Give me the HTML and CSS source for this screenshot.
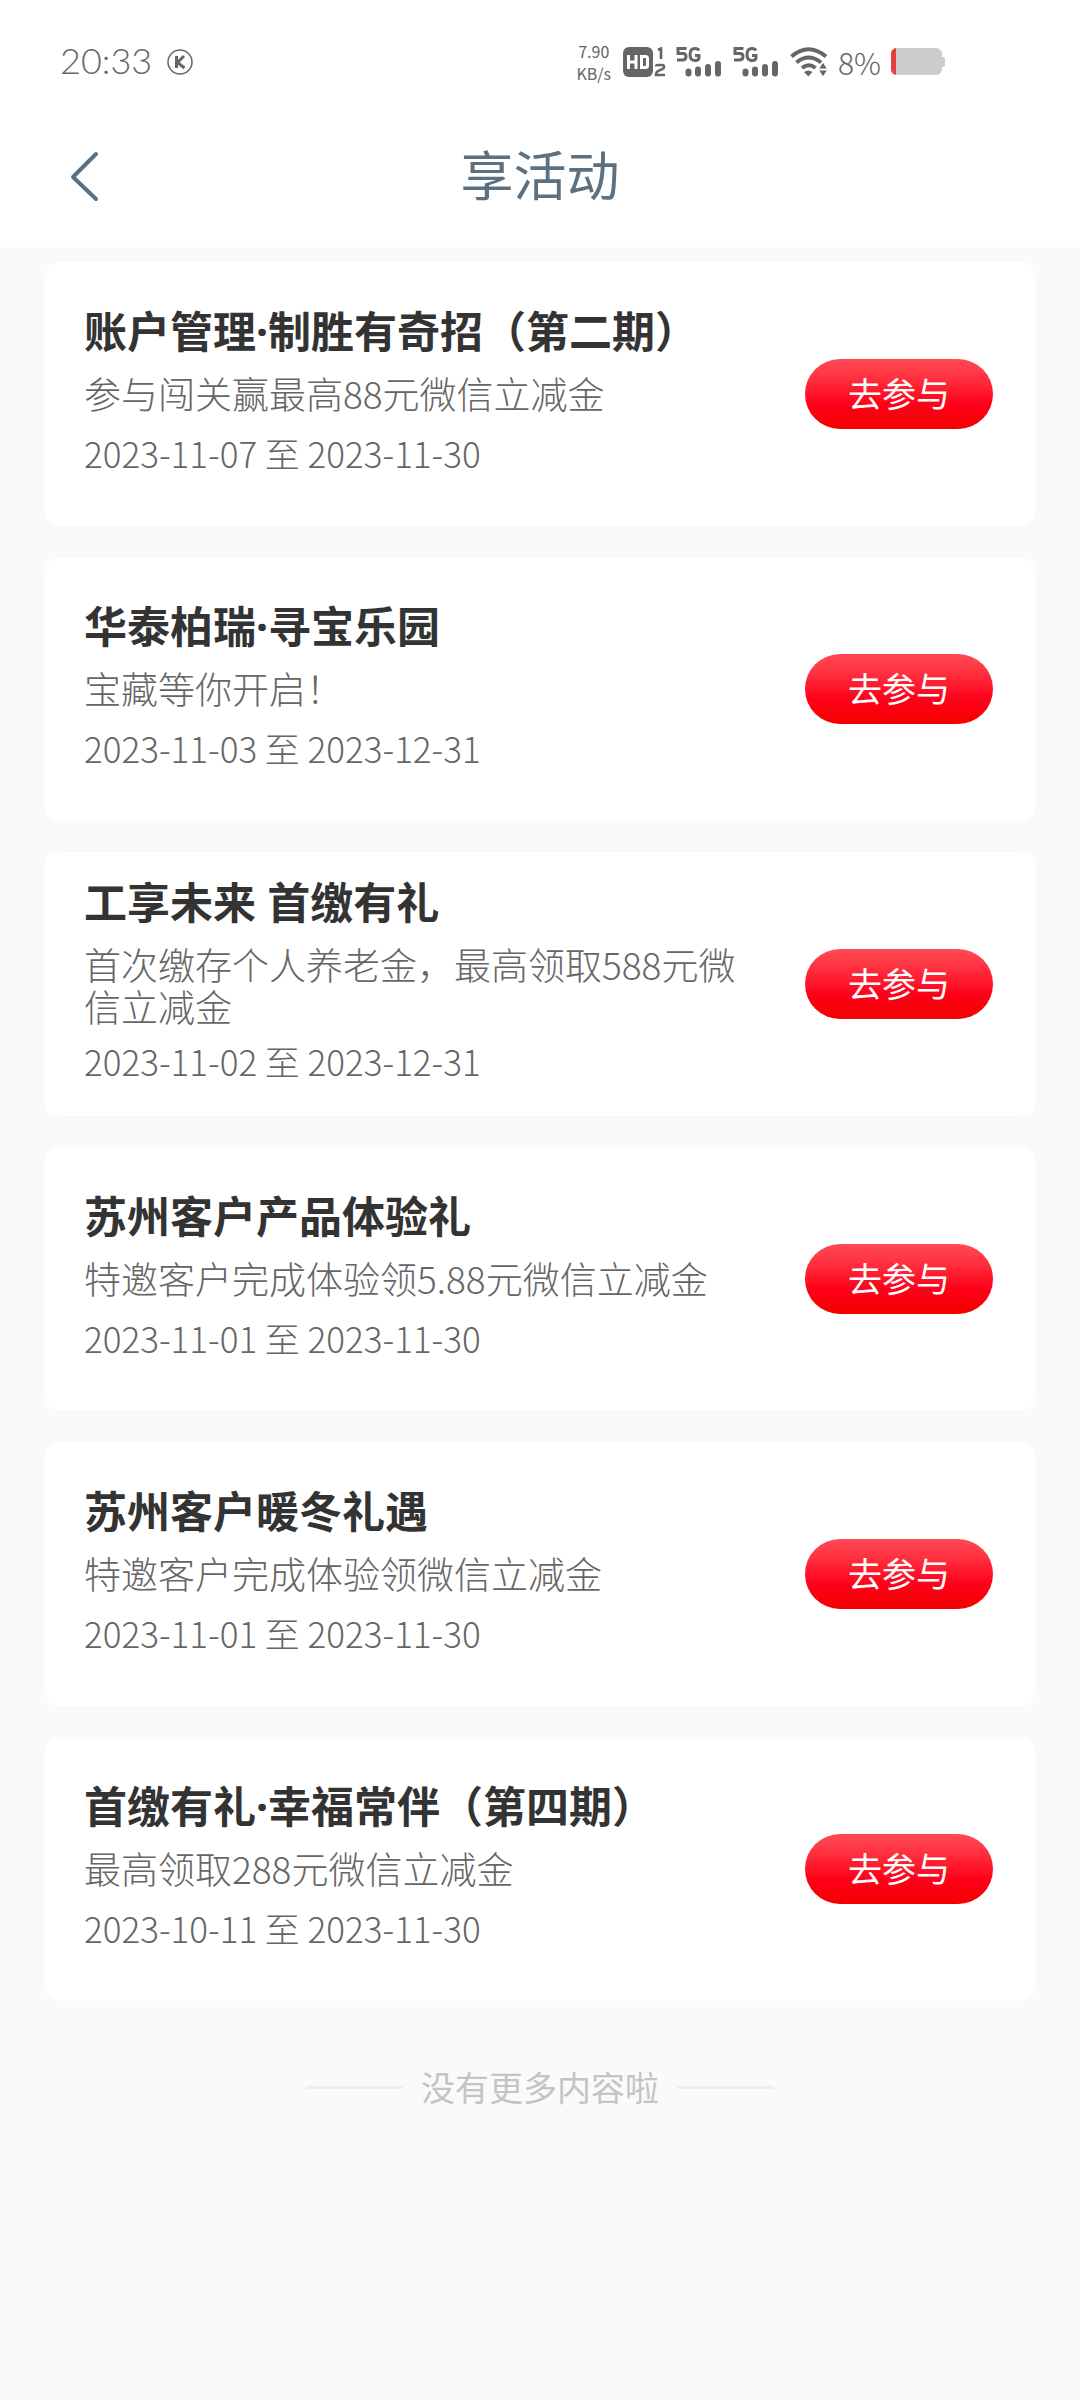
FILE: index.html
```html
<!DOCTYPE html>
<html lang="zh-CN">
<head>
    <meta charset="UTF-8">
    <meta name="viewport" content="width=device-width, initial-scale=1.0">
    <title>享活动</title>
    <link rel="stylesheet" href="styles.css">
</head>
<body>
    <header class="header">
        <div class="status-bar">
            <div class="status-left">
                <span class="time">20:33</span>
                <svg class="k-icon" width="28" height="28" viewBox="0 0 28 28">
                    <circle cx="14" cy="14" r="12" fill="none" stroke="#666" stroke-width="1.5"/>
                    <path d="M10.5 8v12M18 8l-6.5 6.5L18.500 20" fill="none" stroke="#666" stroke-width="3"/>
                </svg>
            </div>
            <div class="status-right">
                <div class="speed">
                    <span>7.90</span>
                    <span>KB/s</span>
                </div>
                <svg class="hd" width="44" height="30" viewBox="0 0 44 30">
                    <rect width="30" height="30" rx="6" fill="#666"/>
                    <path d="M5.500 8v14M13 8v14M5.500 15H13M18.500 9.500h4q2 0 2 2v7q0 2-2 2h-4z" fill="none" stroke="#fff" stroke-width="3"/>
                    <path d="M35 3l3-1.500V12M33 19.500q0-1.500 2-1.500h4q2 0 2 1.800t-2 2.400l-4 2q-2 1-2 3.800h9" fill="none" stroke="#666" stroke-width="2.600"/>
                </svg>
                <svg class="signal" width="45" height="30" viewBox="0 0 45 30">
                    <path d="M10.500 1.500H2v5h5q3 0 3 3t-3 3.500H1M23 3.500Q22 1.500 19 1.500q-5 0-5 6t5 6q4 0 4-3V8.500h-4" fill="none" stroke="#666" stroke-width="3"/>
                    <path d="M12.500 24.500v2M22 22.500v4M32 20v6.500M42 17v9.500" stroke="#666" stroke-width="6" stroke-linecap="round"/>
                </svg>
                <svg class="signal" width="45" height="30" viewBox="0 0 45 30">
                    <path d="M10.500 1.500H2v5h5q3 0 3 3t-3 3.500H1M23 3.500Q22 1.500 19 1.500q-5 0-5 6t5 6q4 0 4-3V8.500h-4" fill="none" stroke="#666" stroke-width="3"/>
                    <path d="M12.500 24.500v2M22 22.500v4M32 20v6.500M42 17v9.500" stroke="#666" stroke-width="6" stroke-linecap="round"/>
                </svg>
                <svg class="wifi" width="38" height="30" viewBox="0 0 38 30">
                    <path d="M1.500 9.500Q18.500-5 36 9.500M6.500 15.500q12-10 24.500 0M12 21q7-5.500 13.500 0" fill="none" stroke="#666" stroke-width="4"/>
                    <path d="M14 25q4.500-3 8.500 0L18.300 29.500z" fill="#666"/>
                    <path d="M28.500 22l4.500-7 4.500 7zM28.500 23h9l-4.500 7z" fill="#666" stroke="#fff" stroke-width="1"/>
                </svg>
                <span class="percent">8%</span>
                <svg class="battery" width="54" height="28" viewBox="0 0 54 28">
                    <rect width="51" height="27" rx="6" fill="#ccc"/>
                    <rect x="48" y="9" width="6" height="10" rx="2" fill="#ccc"/>
                    <path d="M5 0v27Q0 26 0 21V6Q0 1 5 0z" fill="#e5403c"/>
                </svg>
            </div>
        </div>
        <nav class="nav-bar">
            <button class="back-btn" type="button" aria-label="返回">
                <svg width="30" height="52" viewBox="0 0 30 52">
                    <path d="M27 4L4 27l23 22" fill="none" stroke="#5d7080" stroke-width="4" stroke-linecap="round" stroke-linejoin="round"/>
                </svg>
            </button>
            <h1>享活动</h1>
        </nav>
    </header>

    <main class="activity-list">
        <section class="card">
            <div class="card-info">
                <h2>账户管理·制胜有奇招（第二期）</h2>
                <p class="desc">参与闯关赢最高88元微信立减金</p>
                <p class="date">2023-11-07 至 2023-11-30</p>
            </div>
            <button class="join-btn" type="button">去参与</button>
        </section>
        <section class="card">
            <div class="card-info">
                <h2>华泰柏瑞·寻宝乐园</h2>
                <p class="desc">宝藏等你开启！</p>
                <p class="date">2023-11-03 至 2023-12-31</p>
            </div>
            <button class="join-btn" type="button">去参与</button>
        </section>
        <section class="card">
            <div class="card-info">
                <h2>工享未来 首缴有礼</h2>
                <p class="desc">首次缴存个人养老金，最高领取588元微信立减金</p>
                <p class="date">2023-11-02 至 2023-12-31</p>
            </div>
            <button class="join-btn" type="button">去参与</button>
        </section>
        <section class="card">
            <div class="card-info">
                <h2>苏州客户产品体验礼</h2>
                <p class="desc">特邀客户完成体验领5.88元微信立减金</p>
                <p class="date">2023-11-01 至 2023-11-30</p>
            </div>
            <button class="join-btn" type="button">去参与</button>
        </section>
        <section class="card">
            <div class="card-info">
                <h2>苏州客户暖冬礼遇</h2>
                <p class="desc">特邀客户完成体验领微信立减金</p>
                <p class="date">2023-11-01 至 2023-11-30</p>
            </div>
            <button class="join-btn" type="button">去参与</button>
        </section>
        <section class="card">
            <div class="card-info">
                <h2>首缴有礼·幸福常伴（第四期）</h2>
                <p class="desc">最高领取288元微信立减金</p>
                <p class="date">2023-10-11 至 2023-11-30</p>
            </div>
            <button class="join-btn" type="button">去参与</button>
        </section>
    </main>

    <footer class="no-more">没有更多内容啦</footer>
</body>
</html>
```

FILE: styles.css
```css
* {
    margin: 0;
    padding: 0;
    box-sizing: border-box;
}

body {
    background-color: #fafafa;
    min-height: 100vh;
    font-family: "Noto Sans CJK SC", sans-serif;
    color: #666;
}

button {
    border: none;
    background: none;
    font-family: inherit;
    cursor: pointer;
}

svg {
    display: block;
}

.header {
    background-color: #fff;
}

/* status bar */
.status-bar {
    display: flex;
    justify-content: space-between;
    align-items: center;
    height: 124px;
    padding: 0 135px 0 60px;
}

.status-left,
.status-right {
    display: flex;
    align-items: center;
}

.status-left {
    gap: 14px;
}

.time {
    font-family: Lato, sans-serif;
    font-size: 36px;
    font-weight: 300;
    line-height: 40px;
    padding-bottom: 4px;
}

.speed {
    display: flex;
    flex-direction: column;
    align-items: center;
    font-size: 16px;
    line-height: 22px;
    margin-right: 12px;
}

.hd {
    margin-right: 9px;
}

.signal {
    margin-right: 12px;
}

.percent {
    font-size: 30px;
    font-weight: 300;
    line-height: 36px;
    margin: 0 10px;
}

/* title bar */
.nav-bar {
    display: grid;
    grid-template-columns: 1fr auto 1fr;
    align-items: center;
    padding: 10px 69px 35px;
}

.back-btn {
    justify-self: start;
    padding-top: 6px;
}

.nav-bar h1 {
    color: #5d7080;
    font-size: 53px;
    font-weight: 400;
    line-height: 78px;
}

/* cards */
.activity-list {
    display: flex;
    flex-direction: column;
    gap: 31px;
    padding: 15px 44px 0;
}

.card {
    display: flex;
    align-items: center;
    gap: 56px;
    min-height: 264px;
    padding: 20px 43px 20px 40px;
    background-color: #fff;
    border-radius: 16px;
    box-shadow: 0 0 16px rgba(0, 0, 0, 0.01);
}

.card-info {
    flex: 1;
    padding-bottom: 6px;
}

/* Noto Sans comes first for the narrow middle dot */
.card h2 {
    color: #333;
    font-family: "Noto Sans", "Noto Sans CJK SC", sans-serif;
    font-size: 43px;
    font-weight: 700;
    line-height: 56px;
    margin-bottom: 12px;
}

.desc {
    min-height: 47px;
    font-size: 37px;
    font-weight: 300;
    line-height: 42px;
    margin-bottom: 8px;
}

.date {
    font-size: 35px;
    font-weight: 300;
    line-height: 52px;
}

.join-btn {
    width: 188px;
    height: 70px;
    padding-bottom: 4px;
    border-radius: 35px;
    background: linear-gradient(to bottom, #ff4a54 0%, #ff3341 25%, #ff0019 65%, #f50000 100%);
    color: #fff;
    font-size: 34px;
}

/* end of list */
.no-more {
    display: flex;
    justify-content: center;
    align-items: center;
    gap: 18px;
    padding: 60px 0;
    color: #c4c4c4;
    font-size: 34px;
    line-height: 52px;
}

.no-more::before,
.no-more::after {
    content: "";
    width: 97px;
    height: 3px;
    background-color: #eee;
}
```
